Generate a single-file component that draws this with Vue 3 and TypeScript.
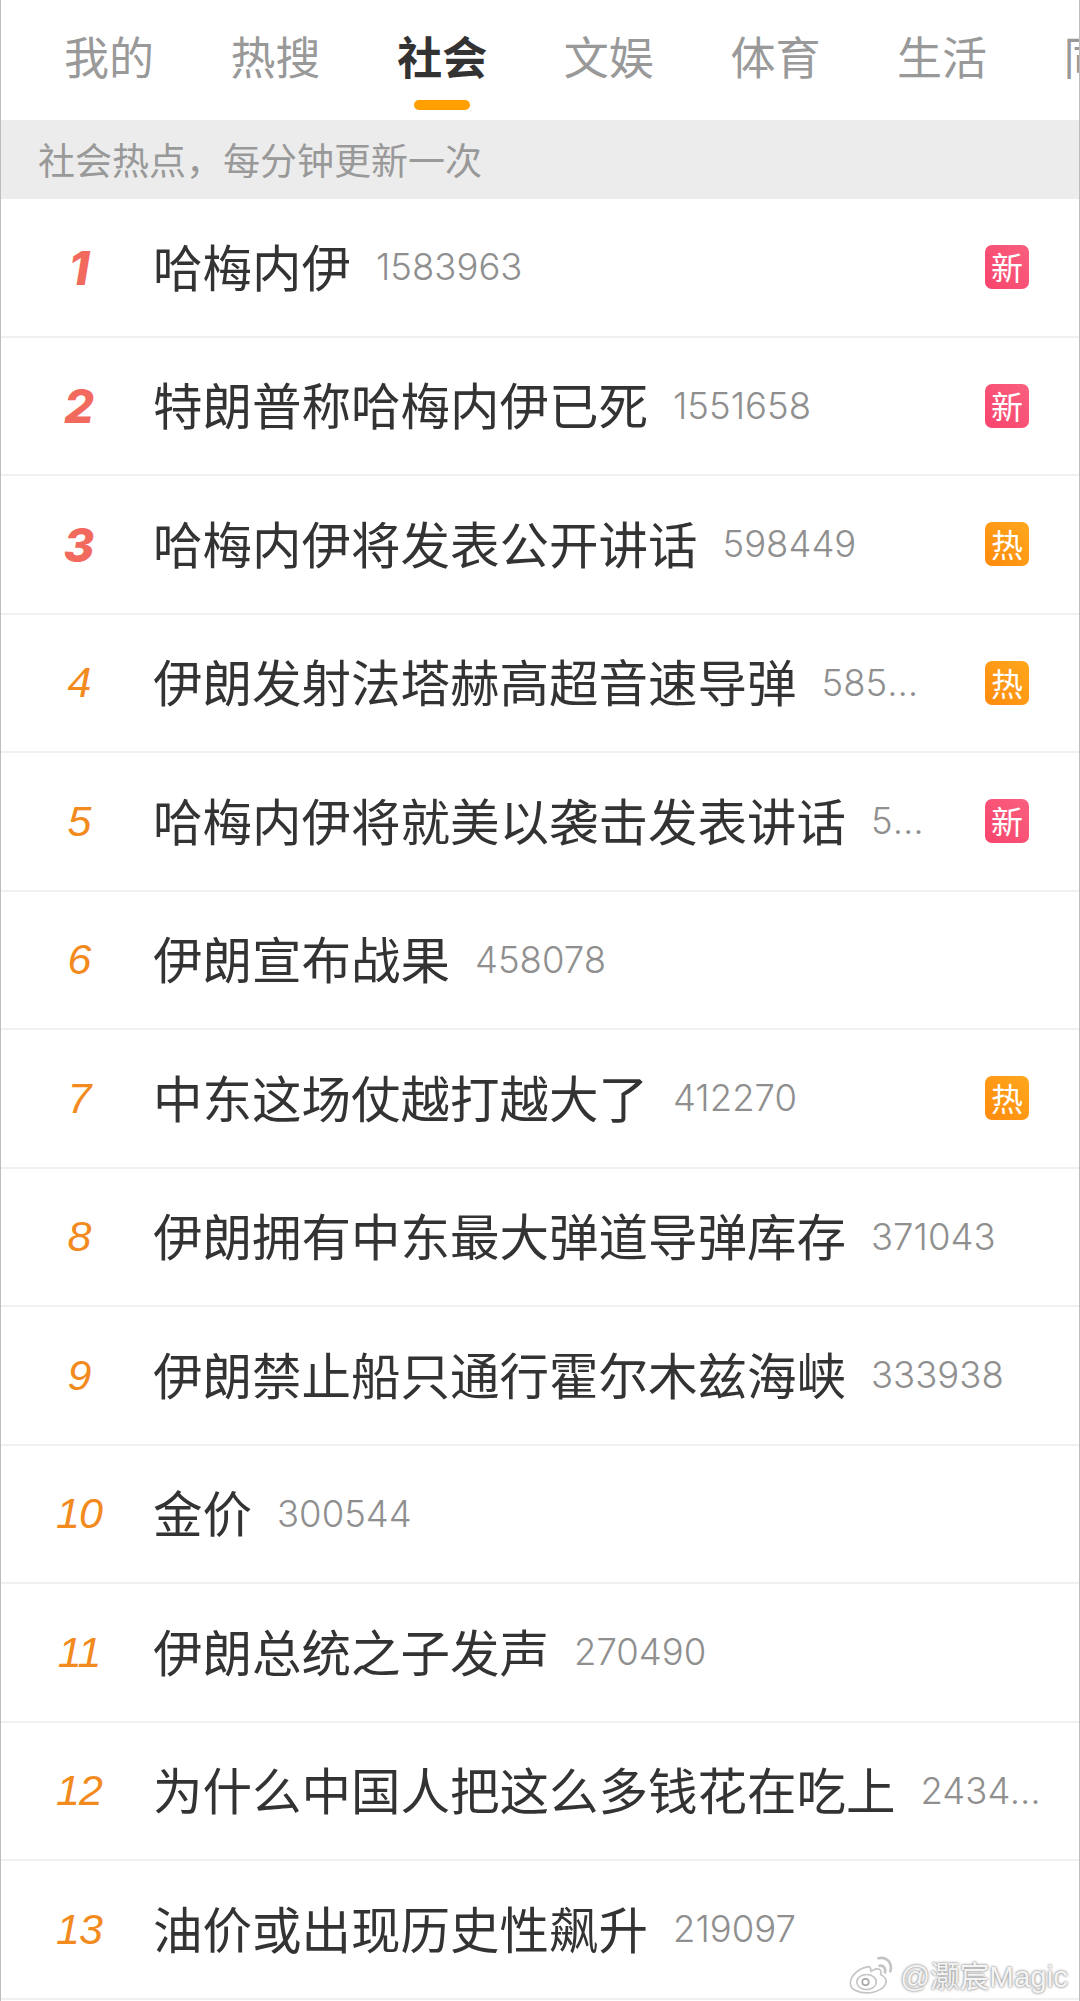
<template>
  <div class="page">
    <nav class="tabs">
      <span v-for="tab in tabs" :key="tab" class="tab" :class="{ active: tab === '社会' }">{{ tab }}</span>
    </nav>
    <div class="notice">社会热点，每分钟更新一次</div>
    <ul class="list">
      <li v-for="(item, i) in items" :key="item.title" class="row">
        <span class="rank" :class="{ top: i < 3 }">{{ i + 1 }}</span>
        <span class="title">{{ item.title }}</span>
        <span class="count">{{ item.count }}</span>
        <span v-if="item.tag" class="tag" :class="item.tag === '新' ? 'tag-new' : 'tag-hot'">{{ item.tag }}</span>
      </li>
    </ul>
    <div class="watermark">
      <svg class="weibo" viewBox="0 0 44 36" width="48" height="39">
        <path d="M18 11c-8 1-16 8-16 15 0 6 8 9 15 9 10 0 18-5 18-11 0-4-4-5-5-6 1-3 0-6-5-5l-4 2c0-3-1-5-3-4z" fill="#fff" stroke="#c4c4c4" stroke-width="1.5" />
        <ellipse cx="17" cy="25" rx="9" ry="7" fill="#fff" stroke="#c4c4c4" stroke-width="1.5" />
        <circle cx="16" cy="25" r="3" fill="#fff" stroke="#a8a8a8" stroke-width="1.5" />
        <path d="M29 10c3-1 6 2 5 6M28 3c7-2 13 4 11 12" fill="none" stroke="#c4c4c4" stroke-width="2.5" stroke-linecap="round" />
      </svg>
      <span class="mark-text">@灏宸Magic</span>
    </div>
  </div>
</template>

<script setup lang="ts">
interface Item {
  title: string;
  count: string;
  tag?: string;
}

const tabs = ['我的', '热搜', '社会', '文娱', '体育', '生活', '同城'];

const items: Item[] = [
  { title: '哈梅内伊', count: '1583963', tag: '新' },
  { title: '特朗普称哈梅内伊已死', count: '1551658', tag: '新' },
  { title: '哈梅内伊将发表公开讲话', count: '598449', tag: '热' },
  { title: '伊朗发射法塔赫高超音速导弹', count: '585512', tag: '热' },
  { title: '哈梅内伊将就美以袭击发表讲话', count: '544210', tag: '新' },
  { title: '伊朗宣布战果', count: '458078' },
  { title: '中东这场仗越打越大了', count: '412270', tag: '热' },
  { title: '伊朗拥有中东最大弹道导弹库存', count: '371043' },
  { title: '伊朗禁止船只通行霍尔木兹海峡', count: '333938' },
  { title: '金价', count: '300544' },
  { title: '伊朗总统之子发声', count: '270490' },
  { title: '为什么中国人把这么多钱花在吃上', count: '243410' },
  { title: '油价或出现历史性飙升', count: '219097' },
];
</script>

<style>
html, body {
  background: #fff;
}
</style>

<style scoped>
.page {
  position: relative;
  width: 1080px;
  height: 2001px;
  box-sizing: border-box;
  overflow: hidden;
  background: #fff;
  border-left: 1px solid #bdbdbd;
  border-right: 1px solid #bdbdbd;
  font-family: "Noto Sans CJK SC", sans-serif;
}

.tabs {
  display: flex;
  gap: 76.6px;
  height: 120px;
  padding-left: 63px;
  white-space: nowrap;
}

.tab {
  position: relative;
  flex: none;
  width: 90px;
  padding-top: 25px;
  font-size: 45px;
  line-height: 62px;
  color: #999;
}

.tab.active {
  color: #333;
  font-weight: 700;
}

.tab.active::after {
  content: "";
  position: absolute;
  left: 17px;
  bottom: 10px;
  width: 56px;
  height: 10px;
  border-radius: 5px;
  background: #ffa000;
}

.notice {
  height: 79px;
  padding-left: 37px;
  background: #ececec;
  font-size: 37px;
  line-height: 78px;
  color: #999;
}

.list {
  margin: 0;
  padding: 0;
  list-style: none;
}

.row {
  display: flex;
  align-items: center;
  box-sizing: border-box;
  height: 138.5px;
  padding-right: 35px;
  border-bottom: 2px solid #f0f0f0;
}

.rank {
  flex: none;
  width: 152px;
  padding-left: 4px;
  box-sizing: border-box;
  text-align: center;
  font-family: "Liberation Sans", sans-serif;
  font-style: italic;
  font-size: 43px;
  letter-spacing: -1px;
  color: #f28a1e;
}

.rank.top {
  font-family: Inter, "Liberation Sans", sans-serif;
  font-weight: 800;
  font-size: 47px;
  letter-spacing: 0;
  color: #f26a5e;
}

.title {
  flex: none;
  padding-bottom: 3px;
  font-size: 49.5px;
  line-height: 70px;
  color: #333;
}

.count {
  flex: 1;
  min-width: 0;
  margin-left: 25px;
  overflow: hidden;
  white-space: nowrap;
  text-overflow: ellipsis;
  font-family: Inter, Roboto, sans-serif;
  font-weight: 300;
  font-size: 36.5px;
  color: #8f8f8f;
}

.tag {
  flex: none;
  width: 44px;
  height: 44px;
  margin-left: 60px;
  margin-right: 15px;
  border-radius: 7px;
  font-size: 32px;
  line-height: 43px;
  text-align: center;
  color: #fff;
}

.tag-new {
  background: linear-gradient(45deg, #f8446c, #f9607f);
}

.tag-hot {
  background: linear-gradient(45deg, #ff8a0d, #ffa81e);
}

.watermark {
  position: absolute;
  right: 11px;
  bottom: 6px;
  display: flex;
  align-items: center;
  gap: 4px;
}

.mark-text {
  font-family: "Liberation Sans", "Noto Sans CJK SC", sans-serif;
  font-size: 29.5px;
  color: #f4f4f4;
  text-shadow: 0 0 3px #8f8f8f, 0 0 2px #a0a0a0;
}
</style>
